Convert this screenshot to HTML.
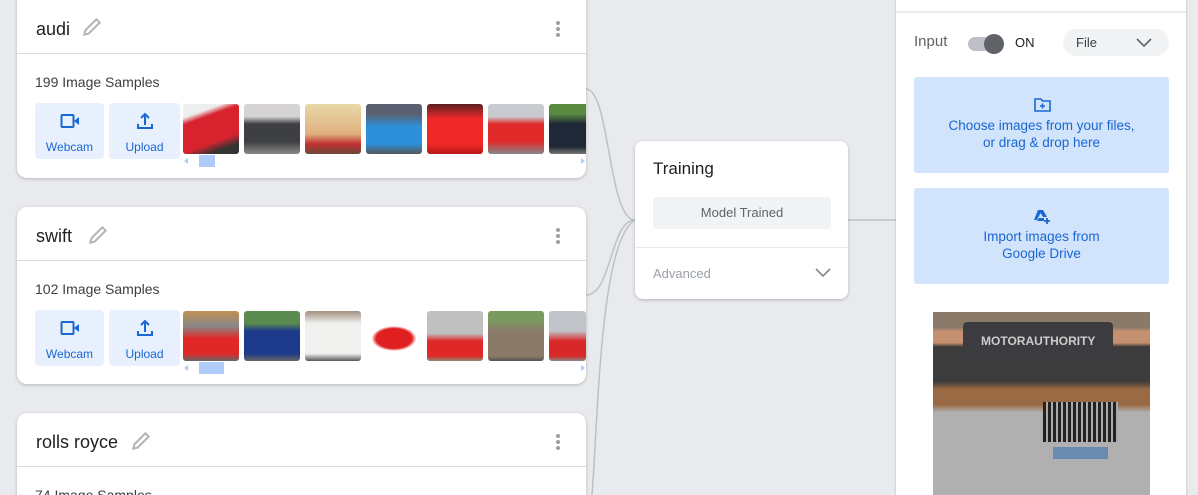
<!DOCTYPE html>
<html style="width:1198px;height:495px;overflow:hidden"><head><meta charset="utf-8"><style>
*{box-sizing:border-box;margin:0;padding:0}
body{width:1198px;height:495px;overflow:hidden;background:#e8eaed;font-family:"Liberation Sans",sans-serif;position:relative}
.card{position:absolute;left:17px;width:569px;background:#fff;border-radius:10px;box-shadow:0 1px 3px rgba(60,64,67,.3)}
.hdr{height:54px;border-bottom:1px solid #dadce0;position:relative}
.title{position:absolute;left:19px;top:19px;font-size:18px;color:#202124}
.pen{position:absolute;top:17px}
.dots{position:absolute;left:539px;top:21px;width:4px}
.dots i{display:block;width:4px;height:4px;border-radius:2px;background:#9aa0a6;margin-bottom:2px}
.cnt{position:absolute;left:18px;top:20px;font-size:14px;color:#3c4043}
.btn{position:absolute;top:49px;height:56px;background:#e8f0fe;border-radius:4px;color:#1967d2;font-size:12px;text-align:center}
.btn span{position:absolute;left:0;right:0;top:37px}
.btn svg{position:absolute;top:9px;left:50%;margin-left:-10px}
.th{position:absolute;top:50px;width:56px;height:50px;border-radius:3px;overflow:hidden}
.sb{position:absolute;top:101px;left:166px;width:403px;height:12px}
</style></head><body>

<svg style="position:absolute;left:0;top:0" width="1198" height="495">
<g fill="none" stroke="#bdc1c6" stroke-width="1.5">
<path d="M586 89 C 610 89, 608 220, 635 220"/>
<path d="M586 295 C 612 295, 610 220, 635 220"/>
<path d="M592 495 C 598 420, 600 240, 635 220"/>
<path d="M848 220 L 896 220"/>
</g></svg>

<!-- card 1 -->
<div class="card" style="top:-10px;height:188px">
 <div class="hdr" style="height:64px"><div class="title" style="top:29px">audi</div>
  <svg class="pen" style="left:64px;top:26px" width="22" height="22" viewBox="0 0 20 20"><path d="M3 17l1-4L14 3l3 3L7 16z" fill="none" stroke="#b0b4b8" stroke-width="1.8"/></svg>
  <div class="dots" style="top:31px"><i></i><i></i><i></i></div></div>
 <div style="position:relative;top:0">
  <div class="cnt">199 Image Samples</div>
  <div class="btn" style="left:18px;width:69px"><svg width="20" height="18" viewBox="0 0 20 18"><rect x="1.5" y="3" width="12" height="12" rx="1" fill="none" stroke="#1967d2" stroke-width="2"/><path d="M14 9l5-4v8z" fill="#1967d2"/></svg><span>Webcam</span></div>
  <div class="btn" style="left:92px;width:71px"><svg width="20" height="18" viewBox="0 0 20 18"><path d="M10 13V2M6 6l4-4 4 4M3 12v4h14v-4" fill="none" stroke="#1967d2" stroke-width="2"/></svg><span>Upload</span></div>
  <div class="th" style="left:166px;background:linear-gradient(160deg,#eee 0 20%,#d8232f 30% 70%,#333 85%)"></div>
  <div class="th" style="left:227px;background:linear-gradient(#d5d3d3 0 25%,#3d3f42 40% 75%,#8c8a88)"></div>
  <div class="th" style="left:288px;background:linear-gradient(#e8d8a8,#e0b080 60%,#c03030 80%,#6a4a3a)"></div>
  <div class="th" style="left:349px;background:linear-gradient(#5a6070 0 20%,#2e90d8 45% 80%,#555)"></div>
  <div class="th" style="left:410px;background:linear-gradient(#5a2020,#f02828 30% 80%,#b81818)"></div>
  <div class="th" style="left:471px;background:linear-gradient(#c8ccd0 0 25%,#e02a2a 40% 75%,#888)"></div>
  <div class="th" style="left:532px;width:37px;border-radius:3px 0 0 3px;background:linear-gradient(#5a8a40 0 20%,#1e2836 40% 85%,#777)"></div>
  <svg class="sb"><path d="M5 3v6l-4-3z" fill="#aecbfa"/><rect x="16" y="0" width="16" height="12" fill="#aecbfa"/><path d="M398 3v6l4-3z" fill="#aecbfa"/></svg>
 </div>
</div>

<!-- card 2 -->
<div class="card" style="top:207px;height:177px">
 <div class="hdr"><div class="title">swift</div>
  <svg class="pen" style="left:70px" width="22" height="22" viewBox="0 0 20 20"><path d="M3 17l1-4L14 3l3 3L7 16z" fill="none" stroke="#b0b4b8" stroke-width="1.8"/></svg>
  <div class="dots"><i></i><i></i><i></i></div></div>
 <div style="position:relative">
  <div class="cnt">102 Image Samples</div>
  <div class="btn" style="left:18px;width:69px"><svg width="20" height="18" viewBox="0 0 20 18"><rect x="1.5" y="3" width="12" height="12" rx="1" fill="none" stroke="#1967d2" stroke-width="2"/><path d="M14 9l5-4v8z" fill="#1967d2"/></svg><span>Webcam</span></div>
  <div class="btn" style="left:92px;width:71px"><svg width="20" height="18" viewBox="0 0 20 18"><path d="M10 13V2M6 6l4-4 4 4M3 12v4h14v-4" fill="none" stroke="#1967d2" stroke-width="2"/></svg><span>Upload</span></div>
  <div class="th" style="left:166px;background:linear-gradient(#c09050,#888 30%,#e02828 55% 85%,#666)"></div>
  <div class="th" style="left:227px;background:linear-gradient(#5a8a50 0 25%,#1e3a8a 40% 85%,#666)"></div>
  <div class="th" style="left:288px;background:linear-gradient(#a09080,#f0f0ee 25% 85%,#555)"></div>
  <div class="th" style="left:349px;background:radial-gradient(ellipse 40% 25% at 50% 55%,#e02020 80%,#fff 100%)"></div>
  <div class="th" style="left:410px;background:linear-gradient(#c0c0c0 0 45%,#e02828 60% 90%,#8a8a70)"></div>
  <div class="th" style="left:471px;background:linear-gradient(#7a9a60 0 20%,#8a7a68 40% 90%,#555)"></div>
  <div class="th" style="left:532px;width:37px;background:linear-gradient(#c0c4c8 0 40%,#d82828 60% 90%,#888)"></div>
  <svg class="sb"><path d="M5 3v6l-4-3z" fill="#aecbfa"/><rect x="16" y="0" width="25" height="12" fill="#aecbfa"/><path d="M398 3v6l4-3z" fill="#aecbfa"/></svg>
 </div>
</div>

<!-- card 3 -->
<div class="card" style="top:413px;height:100px">
 <div class="hdr"><div class="title">rolls royce</div>
  <svg class="pen" style="left:113px" width="22" height="22" viewBox="0 0 20 20"><path d="M3 17l1-4L14 3l3 3L7 16z" fill="none" stroke="#b0b4b8" stroke-width="1.8"/></svg>
  <div class="dots"><i></i><i></i><i></i></div></div>
 <div style="position:relative"><div class="cnt">74 Image Samples</div></div>
</div>

<!-- training -->
<div style="position:absolute;left:635px;top:141px;width:213px;height:158px;background:#fff;border-radius:8px;box-shadow:0 1px 3px rgba(60,64,67,.3)">
 <div style="position:absolute;left:18px;top:18px;font-size:17px;color:#202124">Training</div>
 <div style="position:absolute;left:18px;top:56px;width:178px;height:32px;background:#f1f3f4;border-radius:3px;font-size:13px;color:#5f6368;text-align:center;line-height:32px">Model Trained</div>
 <div style="position:absolute;left:0;right:0;top:106px;border-top:1px solid #e8eaed"></div>
 <div style="position:absolute;left:18px;top:125px;font-size:13px;color:#9aa0a6">Advanced</div>
 <svg style="position:absolute;left:180px;top:127px" width="16" height="10"><path d="M1 1l7 7 7-7" fill="none" stroke="#80868b" stroke-width="1.6"/></svg>
</div>

<!-- right panel -->
<div style="position:absolute;left:896px;top:-10px;width:290px;height:515px;background:#fff;border-radius:8px;box-shadow:0 0 2px rgba(60,64,67,.3)">
 <div style="position:absolute;left:0;right:0;top:21px;border-top:2px solid #e8eaed"></div>
 <div style="position:absolute;left:18px;top:43px;font-size:15px;color:#5f6368">Input</div>
 <div style="position:absolute;left:72px;top:47px;width:34px;height:14px;border-radius:7px;background:#bdc1c6"></div>
 <div style="position:absolute;left:88px;top:44px;width:20px;height:20px;border-radius:10px;background:#5f6368"></div>
 <div style="position:absolute;left:119px;top:45px;font-size:13px;color:#202124">ON</div>
 <div style="position:absolute;left:167px;top:39px;width:106px;height:27px;border-radius:14px;background:#f1f3f4"></div>
 <div style="position:absolute;left:180px;top:45px;font-size:13px;color:#3c4043">File</div>
 <svg style="position:absolute;left:240px;top:48px" width="16" height="10"><path d="M1 1l7 7 7-7" fill="none" stroke="#5f6368" stroke-width="1.6"/></svg>
 <div style="position:absolute;left:18px;top:87px;width:255px;height:96px;background:#d2e3fc;border-radius:3px;color:#1967d2;font-size:13.5px;text-align:center;line-height:17px">
  <svg style="position:absolute;left:120px;top:21px" width="17" height="14" viewBox="0 0 17 14"><path d="M1 1h6l1.5 2H16v10H1z" fill="none" stroke="#1967d2" stroke-width="1.6"/><path d="M8.5 5.5v5M6 8h5" stroke="#1967d2" stroke-width="1.6"/></svg>
  <div style="position:absolute;left:0;right:0;top:40px">Choose images from your files,<br>or drag &amp; drop here</div></div>
 <div style="position:absolute;left:18px;top:198px;width:255px;height:96px;background:#d2e3fc;border-radius:3px;color:#1967d2;font-size:13.5px;text-align:center;line-height:17px">
  <svg style="position:absolute;left:119px;top:21px" width="18" height="16" viewBox="0 0 18 16"><path d="M5 1h5l4 7h-4L7.5 4 4 11H1z" fill="#1967d2"/><path d="M4 12l2-3h5v3z" fill="#1967d2"/><path d="M14 9v6M11 12h6" stroke="#1967d2" stroke-width="1.8"/></svg>
  <div style="position:absolute;left:0;right:0;top:40px">Import images from<br>Google Drive</div></div>
 <div style="position:absolute;left:37px;top:322px;width:217px;height:193px;overflow:hidden;background:linear-gradient(#8a7a6a 0 8%,#c49070 10% 16%,#3c3c3c 18% 36%,#9a6a44 40% 48%,#b0b0b0 52% 95%)">
  <div style="position:absolute;left:30px;top:10px;width:150px;height:40px;background:#3c3c40;border-radius:4px"></div>
  <div style="position:absolute;left:48px;top:22px;font-size:12px;font-weight:bold;color:#ccc">MOTORAUTHORITY</div>
  <div style="position:absolute;left:110px;top:90px;width:75px;height:40px;background:repeating-linear-gradient(90deg,#222 0 3px,#aaa 3px 5px)"></div>
  <div style="position:absolute;left:120px;top:135px;width:55px;height:12px;background:#6a8ab0"></div>
 </div>
</div>
</body></html>
